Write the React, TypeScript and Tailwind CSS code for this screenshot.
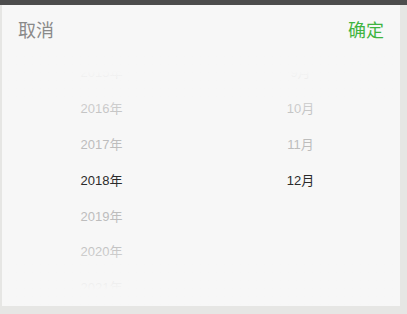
const YEARS = ["2015年", "2016年", "2017年", "2018年", "2019年", "2020年", "2021年"];
const MONTHS = ["9月", "10月", "11月", "12月", "", "", ""];
const SELECTED = 3;

const FONT = {
  fontFamily: '"Liberation Sans", "Noto Sans CJK SC", sans-serif',
};

function Column({ items }: { items: string[] }) {
  return (
    <div className="flex flex-1 flex-col">
      {items.map((item, i) => (
        <div
          key={i}
          className={`flex h-[36px] items-center justify-center text-[13px] ${
            i === SELECTED ? "text-[#2b2b2b]" : "text-[#bdbdbd]"
          }`}
        >
          {item}
        </div>
      ))}
    </div>
  );
}

export default function App() {
  return (
    <div className="h-[314px] w-[407px] overflow-hidden bg-[#e6e6e4]" style={FONT}>
      <div className="h-[5px] bg-[#4d4d4d]" />
      <div className="ml-[2px] w-[398px] bg-[#f7f7f7]">
        <div className="flex h-[50px] items-center justify-between px-[16px] pt-[3px] text-[18px]">
          <span className="text-[#8a8a8a]">取消</span>
          <span className="text-[#3fb43f]">确定</span>
        </div>
        <div className="relative flex h-[251px] overflow-hidden">
          <Column items={YEARS} />
          <Column items={MONTHS} />
          <div className="pointer-events-none absolute inset-x-0 top-0 h-[64px] bg-gradient-to-b from-[#f7f7f7] from-25% to-[#f7f7f7]/0" />
          <div className="pointer-events-none absolute inset-x-0 bottom-0 h-[64px] bg-gradient-to-t from-[#f7f7f7] from-25% to-[#f7f7f7]/0" />
        </div>
      </div>
    </div>
  );
}
